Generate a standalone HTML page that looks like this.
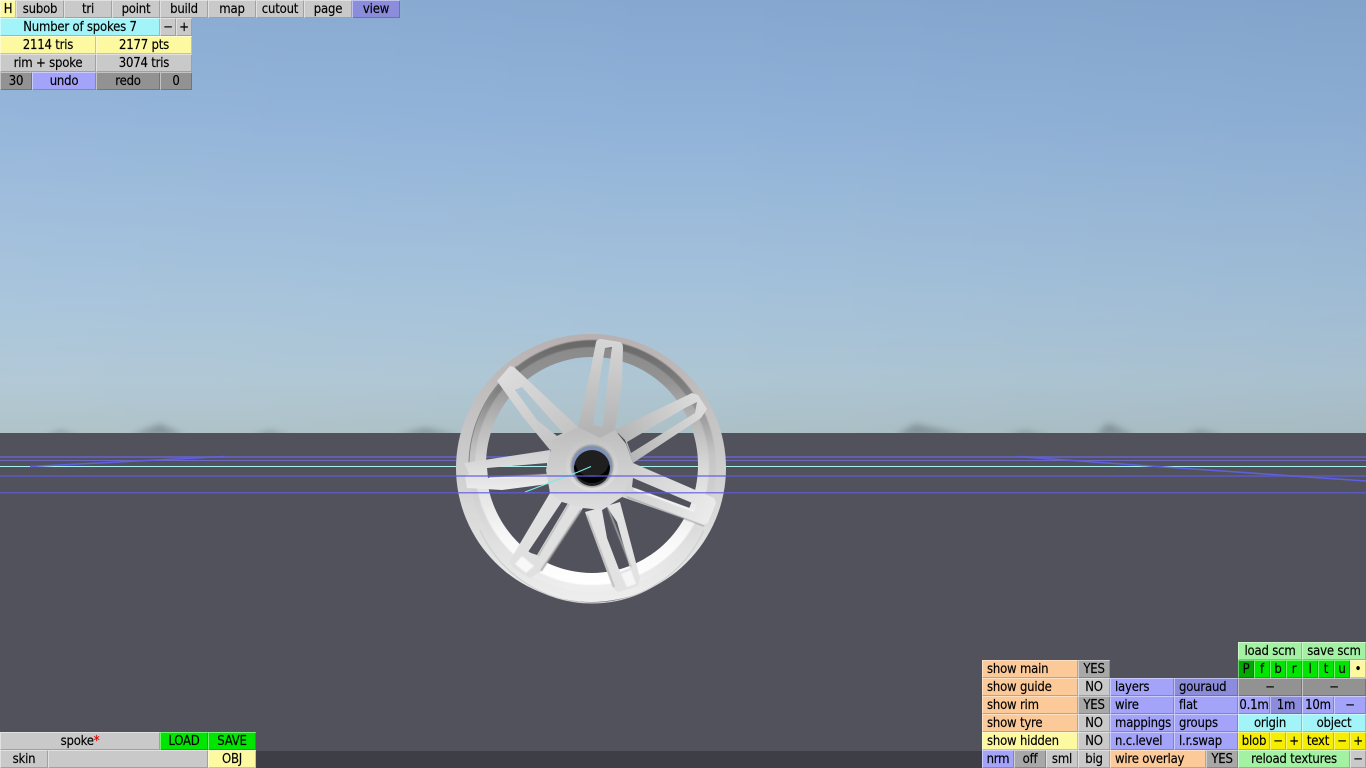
<!DOCTYPE html>
<html><head><meta charset="utf-8"><style>
html,body{margin:0;padding:0;width:1366px;height:768px;overflow:hidden;background:#52525c}
#bg{position:absolute;left:0;top:0;width:1366px;height:433px;background:linear-gradient(180deg,#86a8d0 0,#8fb1d8 110px,#99b9da 190px,#a5c2da 300px,#aec6d4 380px,#acc0c6 433px);overflow:hidden}
#bg:after{content:"";position:absolute;inset:0;background:linear-gradient(90deg,rgba(255,255,255,.05),rgba(255,255,255,0) 50%,rgba(0,0,30,.03))}
#gr{position:absolute;left:0;top:433px;width:1366px;height:335px;background:#52525c}
#st{position:absolute;left:0;top:751px;width:1366px;height:17px;background:#3e3e46}
svg{position:absolute;left:0;top:0}
b{position:absolute;display:block;height:18px;box-sizing:border-box;text-align:center;font:400 13px/20px "DejaVu Sans Condensed","DejaVu Sans","Liberation Sans",sans-serif;letter-spacing:-.2px;-webkit-text-stroke:.15px #000;color:#000;white-space:pre;background:#c9c9c9;box-shadow:inset 1px 1px 0 rgba(255,255,255,.45),inset -1px -1px 0 rgba(0,0,0,.2);overflow:hidden}
.y{background:#fdf9a0}.c{background:#a2f4f8}.p{background:#fcc998}.u{background:#a3a3fa}.ud{background:#8c8cdc}.n{background:#a3f2a3}.gg{background:#00e600}.gd{background:#00a800}.yy{background:#f6ee00}.d{background:#929292}.l{text-align:left;padding-left:5px}.dg{background:#a8a8a8}
</style></head><body>
<div id="bg"></div><div id="gr"></div><div id="st"></div>
<svg width="1366" height="768" viewBox="0 0 1366 768">
<defs>
<filter id="bl" x="-50%" y="-100%" width="200%" height="300%"><feGaussianBlur stdDeviation="3.5"/></filter>
<filter id="s2"><feGaussianBlur stdDeviation=".5"/></filter>
<linearGradient id="lip" x1=".5" y1="0" x2=".5" y2="1"><stop offset="0" stop-color="#b8b0b0"/><stop offset=".4" stop-color="#c8c8c8"/><stop offset="1" stop-color="#eeeeee"/></linearGradient>
<linearGradient id="barA" x1=".5" y1="0" x2=".5" y2="1"><stop offset="0" stop-color="#686868"/><stop offset=".2" stop-color="#808080"/><stop offset=".45" stop-color="#c4c4c4"/><stop offset="1" stop-color="#efefef"/></linearGradient>
<linearGradient id="barB" x1=".5" y1="0" x2=".5" y2="1"><stop offset="0" stop-color="#8a8a8a"/><stop offset=".15" stop-color="#949494"/><stop offset=".32" stop-color="#b8b8b8"/><stop offset=".5" stop-color="#d8d8d8"/><stop offset=".8" stop-color="#f8f8f8"/><stop offset="1" stop-color="#ffffff"/></linearGradient>
<linearGradient id="sT" gradientUnits="userSpaceOnUse" x1="0" y1="340" x2="0" y2="430"><stop offset="0" stop-color="#d6d6d6"/><stop offset="1" stop-color="#b4b4b4"/></linearGradient>
<linearGradient id="sUL" gradientUnits="userSpaceOnUse" x1="505" y1="375" x2="565" y2="440"><stop offset="0" stop-color="#dcdcdc"/><stop offset="1" stop-color="#c4c4c4"/></linearGradient>
<linearGradient id="sUR" gradientUnits="userSpaceOnUse" x1="700" y1="400" x2="620" y2="445"><stop offset="0" stop-color="#dcdcdc"/><stop offset="1" stop-color="#b4b4b4"/></linearGradient>
<linearGradient id="sL" gradientUnits="userSpaceOnUse" x1="0" y1="452" x2="0" y2="490"><stop offset="0" stop-color="#d0d0d0"/><stop offset="1" stop-color="#ececec"/></linearGradient>
<linearGradient id="sR" gradientUnits="userSpaceOnUse" x1="630" y1="470" x2="715" y2="515"><stop offset="0" stop-color="#cfcfcf"/><stop offset="1" stop-color="#ececec"/></linearGradient>
<linearGradient id="hubg" gradientUnits="userSpaceOnUse" x1="0" y1="425" x2="0" y2="510"><stop offset="0" stop-color="#bcbcbc"/><stop offset="1" stop-color="#dedede"/></linearGradient>
<linearGradient id="ringg" gradientUnits="userSpaceOnUse" x1="0" y1="440" x2="0" y2="492"><stop offset="0" stop-color="#c4c4c4"/><stop offset="1" stop-color="#e0e0e0"/></linearGradient>
<mask id="open" maskUnits="userSpaceOnUse" x="440" y="320" width="300" height="300"><rect x="440" y="320" width="300" height="300" fill="#fff"/><ellipse cx="592" cy="465" rx="106" ry="108" fill="#000"/></mask>
<clipPath id="sky"><rect x="0" y="0" width="1366" height="433"/></clipPath>
</defs>
<g fill="#67767c" filter="url(#bl)" clip-path="url(#sky)" opacity=".6">
<path d="M130 436L160 424L185 436Z"/><path d="M45 436L60 431L80 436Z"/><path d="M250 436L270 431L290 436Z"/><path d="M395 436L425 428L460 436Z"/>
<path d="M895 436L915 424L970 436Z"/><path d="M1005 436L1025 431L1050 436Z"/><path d="M1095 436L1108 423L1135 436Z"/><path d="M1180 436L1200 430L1225 436Z"/>
</g>
<rect x="0" y="456" width="1366" height="2" fill="#625fae"/>
<rect x="0" y="460" width="1366" height="1" fill="#6a68c0"/>
<rect x="0" y="466" width="1366" height="1" fill="#a8f2ee"/>
<path d="M30 466.5L225 456.5" stroke="#5f60e0" stroke-width="1.5" fill="none"/>
<path d="M1017 456.5L1157 466.5L1366 481" stroke="#5f60e0" stroke-width="1.5" fill="none"/>
<!-- wheel rim -->
<g mask="url(#open)">
<ellipse cx="591" cy="468" rx="135" ry="134" fill="url(#lip)"/>
<ellipse cx="592.5" cy="466" rx="123.5" ry="126" fill="url(#barA)" filter="url(#s2)"/>
<ellipse cx="592" cy="466" rx="117" ry="119" fill="url(#barB)" filter="url(#s2)"/>
<path d="M469 470A123.5 126 0 0 1 517 366" fill="none" stroke="#858585" stroke-width="1"/>
<path d="M480 530A123.5 126 0 0 0 704 530" fill="none" stroke="#cfcfcf" stroke-width="1.2"/>
</g>
<!-- spokes -->
<g fill-rule="evenodd">
<path fill="url(#sT)" d="M578 428L590 373L596 342Q597 339 601 339L620 342Q623 343 623 348L622 380L615 431L598 440ZM605 348L612 347L608 377L603 427L593 425L600 377Z"/>
<path fill="url(#sUL)" d="M497 381L510 366L514 367L578 427L562 445L550 450L523 417ZM515 390L522 387L563 433L557 436L537 420Z"/>
<path fill="url(#sUR)" d="M615 430L692 393L698 395L707 409L701 418L633 463L625 440ZM627 442L685 408L697 402L695 413L631 453Z"/>
<path fill="url(#sL)" d="M464 463L550 450L553 478L548 484L502 490L467 488L465 477L469 473ZM487 468L547 463L547 475L488 478Z"/>
<path fill="url(#sR)" d="M633 463L714 498L716 503L708 523L703 525L622 497L626 478ZM633 478L697 505L695 510L632 487Z"/>
<path fill="#e0e0e0" d="M550 493L583 508L540 572L530 578L513 568L509 562ZM563 500L568 503L537 555L528 552Z"/>
<path fill="#e2e2e2" d="M585 512L620 502L640 578L638 586L618 592L613 588ZM602 510L607 507L617 522L630 568L620 572L607 538Z"/>
</g>
<g fill="none" filter="url(#s2)">
<path d="M627 497L704 526" stroke="#8a8a8a" stroke-width=".8"/>
<path d="M581 510L541 571" stroke="#a6a6a6" stroke-width="1.6"/>
<path d="M587 515L614 587" stroke="#b8b8b8" stroke-width="1.6"/>
<path d="M569 504L538 556" stroke="#b0b0b0" stroke-width="1.2"/>
<path d="M608 508L631 567" stroke="#b8b8b8" stroke-width="1.2"/>
<path d="M489 478L547 475" stroke="#f8f8f8" stroke-width="1.5"/>
<path d="M634 489L694 511" stroke="#f8f8f8" stroke-width="1.5"/>
</g>
<path d="M522 556L534 566L526 573L515 564Z" fill="#f8f8f8" filter="url(#s2)"/>
<path d="M621 574L631 570L636 584L627 587Z" fill="#f6f6f6" filter="url(#s2)"/>
<!-- hub -->
<path d="M553 440L578 427L600 438L615 430L626 444L633 463L630 480L622 497L602 510L583 508L562 502L550 493L546 470Z" fill="url(#hubg)"/>
<circle cx="592" cy="465" r="26" fill="url(#ringg)" filter="url(#s2)"/>
<circle cx="592" cy="466" r="21.5" fill="#a0a0a0" filter="url(#s2)"/>
<circle cx="592" cy="466" r="20" fill="#7e90b8"/>
<circle cx="592" cy="468" r="18" fill="#201f20"/>
<path d="M574 466a18 17 0 0 0 36 0l-2-1q-1 10-16 12q-15-2-16-12Z" fill="#000"/>
<!-- overlay lines -->
<path d="M525 492L578 472L591 466.5" stroke="#7fe8e8" stroke-width="1.2" fill="none"/>
<rect x="0" y="475" width="1366" height="2" fill="#5f5ce0" opacity=".6"/>
<rect x="0" y="492" width="1366" height="1.5" fill="#5f5ce0" opacity=".75"/>
</svg>

<b class="y" style="left:0;top:0;width:16px">H</b>
<b style="left:16px;top:0;width:48px">subob</b>
<b style="left:64px;top:0;width:48px">tri</b>
<b style="left:112px;top:0;width:48px">point</b>
<b style="left:160px;top:0;width:48px">build</b>
<b style="left:208px;top:0;width:48px">map</b>
<b style="left:256px;top:0;width:48px">cutout</b>
<b style="left:304px;top:0;width:48px">page</b>
<b class="ud" style="left:352px;top:0;width:48px">view</b>
<b class="c" style="left:0;top:18px;width:160px">Number of spokes 7</b>
<b style="left:160px;top:18px;width:16px">−</b>
<b style="left:176px;top:18px;width:16px">+</b>
<b class="y" style="left:0;top:36px;width:96px">2114 tris</b>
<b class="y" style="left:96px;top:36px;width:96px">2177 pts</b>
<b style="left:0;top:54px;width:96px">rim + spoke</b>
<b style="left:96px;top:54px;width:96px">3074 tris</b>
<b class="d" style="left:0;top:72px;width:32px">30</b>
<b class="u" style="left:32px;top:72px;width:64px">undo</b>
<b class="d" style="left:96px;top:72px;width:64px">redo</b>
<b class="d" style="left:160px;top:72px;width:32px">0</b>

<b style="left:0;top:732px;width:160px">spoke<span style="color:#e00000;-webkit-text-stroke:.15px #e00000">*</span></b>
<b class="gg" style="left:160px;top:732px;width:48px">LOAD</b>
<b class="gg" style="left:208px;top:732px;width:48px">SAVE</b>
<b style="left:0;top:750px;width:48px">skin</b>
<b style="left:48px;top:750px;width:160px"></b>
<b class="y" style="left:208px;top:750px;width:48px">OBJ</b>

<b class="n" style="left:1238px;top:642px;width:64px">load scm</b>
<b class="n" style="left:1302px;top:642px;width:64px">save scm</b>
<b class="gd" style="left:1238px;top:660px;width:16px">P</b>
<b class="gg" style="left:1254px;top:660px;width:16px">f</b>
<b class="gg" style="left:1270px;top:660px;width:16px">b</b>
<b class="gg" style="left:1286px;top:660px;width:16px">r</b>
<b class="gg" style="left:1302px;top:660px;width:16px">l</b>
<b class="gg" style="left:1318px;top:660px;width:16px">t</b>
<b class="gg" style="left:1334px;top:660px;width:16px">u</b>
<b class="y" style="left:1350px;top:660px;width:16px">•</b>
<b class="p l" style="left:982px;top:660px;width:96px">show main</b>
<b class="dg" style="left:1078px;top:660px;width:32px">YES</b>
<b class="p l" style="left:982px;top:678px;width:96px">show guide</b>
<b style="left:1078px;top:678px;width:32px">NO</b>
<b class="u l" style="left:1110px;top:678px;width:64px">layers</b>
<b class="ud l" style="left:1174px;top:678px;width:64px">gouraud</b>
<b class="d" style="left:1238px;top:678px;width:64px">−</b>
<b class="d" style="left:1302px;top:678px;width:64px">−</b>
<b class="p l" style="left:982px;top:696px;width:96px">show rim</b>
<b class="dg" style="left:1078px;top:696px;width:32px">YES</b>
<b class="u l" style="left:1110px;top:696px;width:64px">wire</b>
<b class="u l" style="left:1174px;top:696px;width:64px">flat</b>
<b class="u" style="left:1238px;top:696px;width:32px">0.1m</b>
<b class="ud" style="left:1270px;top:696px;width:32px">1m</b>
<b class="u" style="left:1302px;top:696px;width:32px">10m</b>
<b class="u" style="left:1334px;top:696px;width:32px">−</b>
<b class="p l" style="left:982px;top:714px;width:96px">show tyre</b>
<b style="left:1078px;top:714px;width:32px">NO</b>
<b class="u l" style="left:1110px;top:714px;width:64px">mappings</b>
<b class="u l" style="left:1174px;top:714px;width:64px">groups</b>
<b class="c" style="left:1238px;top:714px;width:64px">origin</b>
<b class="c" style="left:1302px;top:714px;width:64px">object</b>
<b class="y l" style="left:982px;top:732px;width:96px">show hidden</b>
<b style="left:1078px;top:732px;width:32px">NO</b>
<b class="u l" style="left:1110px;top:732px;width:64px">n.c.level</b>
<b class="u l" style="left:1174px;top:732px;width:64px">l.r.swap</b>
<b class="yy" style="left:1238px;top:732px;width:32px">blob</b>
<b class="yy" style="left:1270px;top:732px;width:16px">−</b>
<b class="yy" style="left:1286px;top:732px;width:16px">+</b>
<b class="yy" style="left:1302px;top:732px;width:32px">text</b>
<b class="yy" style="left:1334px;top:732px;width:16px">−</b>
<b class="yy" style="left:1350px;top:732px;width:16px">+</b>
<b class="u" style="left:982px;top:750px;width:32px">nrm</b>
<b class="dg" style="left:1014px;top:750px;width:32px">off</b>
<b style="left:1046px;top:750px;width:32px">sml</b>
<b style="left:1078px;top:750px;width:32px">big</b>
<b class="p l" style="left:1110px;top:750px;width:96px">wire overlay</b>
<b class="dg" style="left:1206px;top:750px;width:32px">YES</b>
<b class="n" style="left:1238px;top:750px;width:112px">reload textures</b>
<b style="left:1350px;top:750px;width:16px">−</b>
</body></html>
